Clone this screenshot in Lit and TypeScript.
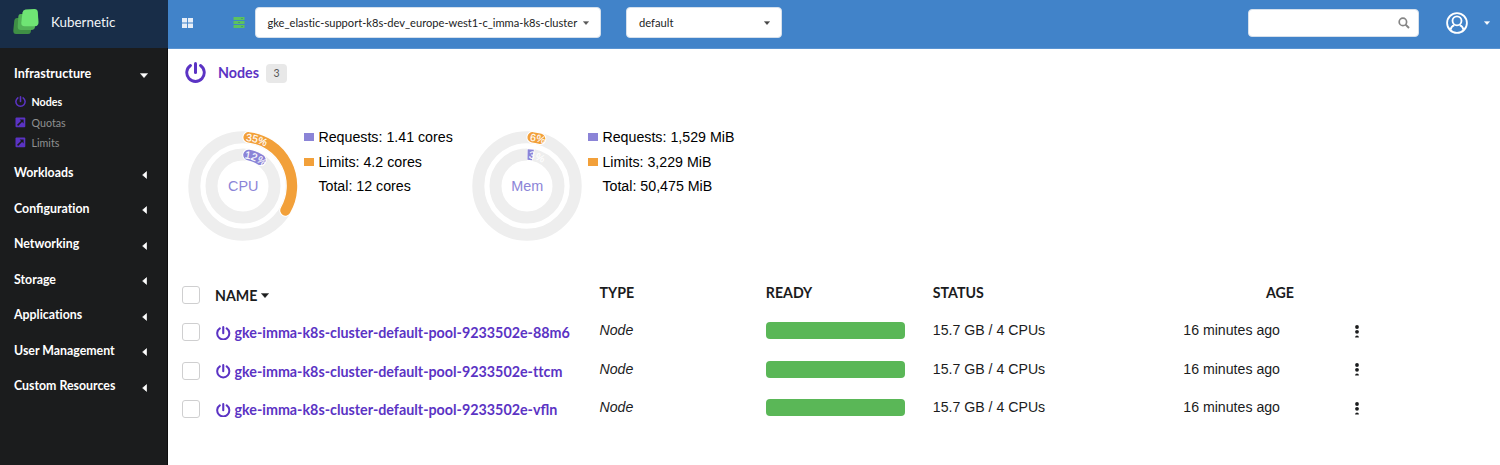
import { LitElement, html, svg, css } from "lit";
import { customElement, property } from "lit/decorators.js";

const POWER = svg`<path d="M5.500 3.500A8.750 8.750 0 1 0 15.500 3.500" fill="none" stroke="currentColor" stroke-width="2.900" stroke-linecap="round"/><path d="M10.500 1.500V10.400" stroke="currentColor" stroke-width="3" stroke-linecap="round"/>`;
const power = (cls: string) => html`<svg class=${cls} viewBox="0 0 21 21">${POWER}</svg>`;

const RAD = Math.PI / 180;
const pt = (r: number, deg: number) => `${(55 + r * Math.sin(deg * RAD)).toFixed(2)} ${(55 - r * Math.cos(deg * RAD)).toFixed(2)}`;
const arc = (r: number, a: number, b: number) => `M${pt(r, a)}A${r} ${r} 0 ${b - a > 180 ? 1 : 0} 1 ${pt(r, b)}`;

@customElement("usage-gauge")
class UsageGauge extends LitElement {
  @property() label = "";
  @property({ type: Number }) requests = 0;
  @property({ type: Number }) limits = 0;
  static styles = css`
    :host { display: block; width: 110px; height: 110px; }
    svg { display: block; width: 110px; height: 110px; overflow: visible; }
    .track { fill: none; stroke: #eee; }
    .halo { fill: none; stroke: #fff; stroke-linecap: round; }
    .bar { fill: none; stroke-linecap: round; }
    .flat { stroke-linecap: butt; }
    .lim { stroke: #f2a03a; }
    .req { stroke: #8b84d7; }
    .pct { font: 10.4px "Liberation Sans", sans-serif; fill: #fff; stroke: #fff; stroke-width: .15px; }
    .name { font: 14.4px "Liberation Sans", sans-serif; fill: #8b84d7; text-anchor: middle; }
  `;
  ring(r: number, width: number, pct: number, cls: string, id: string) {
    const end = pct * 3.6;
    const cap = (width / 2 / r) / RAD;
    const flat = end < 2 * cap;
    const d = flat ? arc(r, 1, end) : arc(r, cap + 0.5, end - cap);
    return svg`
      <path class="halo ${flat ? "flat" : ""}" d=${flat ? arc(r, 0, end + 1) : d} stroke-width=${width + 2}/>
      <path class="bar ${cls} ${flat ? "flat" : ""}" d=${d} stroke-width=${width}/>
      <path id=${id} d=${arc(r - 3.8, 3.5, 120)} fill="none"/>
      <text class="pct"><textPath href="#${id}">${pct}%</textPath></text>`;
  }
  render() {
    return html`<svg viewBox="0 0 110 110">
      <circle class="track" cx="55" cy="55" r="48.700" stroke-width="12"/>
      <circle class="track" cx="55" cy="55" r="31.500" stroke-width="12"/>
      ${this.ring(31.5, 10.6, this.requests, "req", "inner")}
      ${this.ring(49, 10.4, this.limits, "lim", "outer")}
      <text class="name" x="55.300" y="60">${this.label}</text>
    </svg>`;
  }
}

const GROUPS = [
  "Workloads",
  html`<span>Con<span class="lig">fi</span>guration</span>`,
  "Networking", "Storage", "Applications", "User Management", "Custom Resources",
];
const NODES = ["88m6", "ttcm", "vfln"];

@customElement("app-root")
class AppRoot extends LitElement {
  static styles = css`
    :host { display: grid; grid-template-columns: 168px 1fr; height: 465px; overflow: hidden; background: #fff; color: #1b1c1d; font-family: Lato, sans-serif; font-variant-ligatures: none; }
    svg { display: block; flex: none; }
    * { box-sizing: border-box; white-space: nowrap; }
    .lig { font-variant-ligatures: normal; }
    .side { background: #1b1c1d; border-right: 1px solid #0e0e0f; height: 465px; }
    .brand { height: 48px; margin-right: -1px; background: #182d48; display: flex; align-items: center; padding: 0 0 4px 13px; gap: 12px; color: #f2f5f8; font-size: 13.4px; }
    .brand span { margin-bottom: 1px; }
    .logo { width: 26px; height: 26px; }
    .menu { padding-top: 7px; }
    .group { height: 35.5px; display: flex; align-items: center; justify-content: space-between; padding: 0 20px 0 14px; color: #fff; font-weight: 700; font-size: 12.35px; }
    .group.open { font-size: 12.6px; padding: 1px 19px 0 14px; }
    .group svg { margin-top: 4px; }
    .tri-l { width: 5px; height: 8px; }
    .tri-d { width: 8px; height: 5px; }
    .sub { display: flex; align-items: center; height: 20.5px; padding-left: 15px; gap: 5.5px; color: #8f9091; font-size: 10.7px; }
    .subs { padding: 0 0 2px; }
    .sub.on { color: #fff; font-weight: 700; height: 21.5px; }
    .ico { width: 11px; height: 11px; color: #5b33c4; }
    .top { height: 49px; background: #4183c9; border-bottom: 1px solid #5a94d2; display: flex; align-items: center; padding: 0 10px 3px 14px; }
    .grid4 { width: 11px; height: 10px; margin-right: 40px; }
    .server { width: 12px; height: 11px; margin-right: 9.500px; }
    .drop { height: 31px; border: 1px solid #d5e0ec; border-radius: 4px; background: #fff; display: flex; align-items: center; justify-content: space-between; padding: 0 11px 0 12px; color: #1b1c1d; font-size: 11.2px; }
    .d1 { width: 346px; margin-right: 25.500px; font-size: 11.12px; }
    .d2 { width: 156px; }
    .caret { width: 6px; height: 4px; }
    .search { width: 171px; height: 28px; margin-left: auto; border: 1px solid #d5e0ec; border-radius: 4px; background: #fff; display: flex; align-items: center; justify-content: flex-end; padding-right: 8.5px; }
    .lens { width: 12px; height: 12px; }
    .user { width: 22px; height: 22px; margin: 0 16px 0 27px; }
    .main { min-width: 0; }
    .title { display: flex; align-items: center; height: 48px; padding-left: 16.5px; color: #5b33c4; font-weight: 700; font-size: 14.3px; }
    .title .txt { margin-bottom: 1px; }
    .big { width: 21px; height: 21px; margin: 0 12.5px 2px 0; }
    .count { margin-left: 7px; width: 21px; height: 19px; border-radius: 4px; background: #e8e8e8; color: #555; font-size: 10.5px; font-weight: 400; display: grid; place-items: center; }
    .gauges { display: flex; padding: 33.6px 0 0 20.4px; height: 179px; }
    .gauge { width: 284px; display: flex; gap: 6px; }
    .legend { font: 14.22px/24px "Liberation Sans", sans-serif; color: #000; margin-top: -5.300px; }
    .row-l { display: flex; align-items: center; gap: 4px; height: 24.3px; }
    .sw { width: 10px; height: 8px; }
    .sw.req { background: #8b84d7; }
    .sw.lim { background: #f2a03a; }
    .tr { display: grid; grid-template-columns: 32.5px 384.5px 166.300px 167px 200.200px 162px 100px; height: 38.5px; padding-left: 14.5px; align-items: center; font: 14.15px "Liberation Sans", sans-serif; }
    .tr.head { height: 37px; font: 700 14.2px Lato, sans-serif; }
    .cb { width: 18px; height: 18px; border: 1px solid #cfcfd0; border-radius: 3px; margin: 0 0 0 -.5px; }
    .head .cb { margin-top: 1px; }
    .name { display: flex; align-items: center; gap: 4px; font: 700 14.3px Lato, sans-serif; font-variant-ligatures: none; color: #5b33c4; margin-top: 1px; }
    .name.lig { font-variant-ligatures: normal; }
    .head .name { color: #1b1c1d; font-size: 14.2px; }
    .up { margin-bottom: 4px; }
    .pw { width: 14.5px; height: 14.5px; margin: 0 0 0 1px; }
    .type { font-style: italic; margin-bottom: 4px; }
    .bar { width: 139px; height: 17px; border-radius: 4px; background: #5ab757; margin-bottom: 3px; }
    .age { text-align: right; padding-right: 0; margin-right: 15px; margin-bottom: 4px; }
    .head .age { margin-right: 1px; }
    .dots { width: 4px; height: 13px; justify-self: start; margin: 0 0 2px 60.500px; }
  `;
  tri(cls: string, color: string) {
    return cls === "tri-l"
      ? html`<svg class="tri-l" viewBox="0 0 5 8"><path d="M4.600 .6V7.400L.6 4Z" fill=${color} stroke=${color} stroke-width=".6" stroke-linejoin="round" /></svg>`
      : html`<svg class=${cls} viewBox="0 0 8 5"><path d="M.3 .4H7.700L4 4.700Z" fill=${color} stroke=${color} stroke-width=".4" stroke-linejoin="round" /></svg>`;
  }
  quota() {
    return html`<svg class="ico" viewBox="0 0 11 11"><rect x=".5" y=".5" width="9.800" height="9.800" rx="1" fill="#5b33c4" /><path d="M2.600 8.400L7 4" stroke="#1b1c1d" stroke-width="1.500" /><path d="M4.600 2.400H8.600V6.400Z" fill="#1b1c1d" /></svg>`;
  }
  gauge(label: string, req: number, lim: number, r: string, l: string, t: string) {
    return html`<div class="gauge">
      <usage-gauge label=${label} requests=${req} limits=${lim}></usage-gauge>
      <div class="legend">
        <div class="row-l"><span class="sw req"></span>Requests: ${r}</div>
        <div class="row-l"><span class="sw lim"></span>Limits: ${l}</div>
        <div class="row-l"><span class="sw"></span>Total: ${t}</div>
      </div>
    </div>`;
  }
  render() {
    return html`
      <nav class="side">
        <div class="brand">
          <svg class="logo" viewBox="0 0 26 26">
            <path d="M3.800 9H15a2 2 0 0 1 2 2L18 20Q18.500 25 15 25H3Q.200 25 .300 21.500L1.300 11.500Q1.600 9 3.800 9Z" fill="#3f8f45" />
            <path d="M7.500 5H18a3 3 0 0 1 3 3L22 17Q22.300 21 18 21H8Q4.500 21 4.700 17.500L5.300 8Q5.500 5 7.500 5Z" fill="#52b257" />
            <path d="M12.500 .500L21.500 0Q24.500 0 24.800 3L25.500 13Q25.700 17 22 17.300H11.500Q8 17.300 8.300 13.500L9.500 3.500Q9.900 .800 12.500 .500Z" fill="#6fe574" />
          </svg>
          <span>Kubernetic</span>
        </div>
        <div class="menu">
          <div class="group open">Infrastructure${this.tri("tri-d", "#fff")}</div>
          <div class="subs">
            <div class="sub on">${power("ico")}Nodes</div>
            <div class="sub">${this.quota()}Quotas</div>
            <div class="sub">${this.quota()}Limits</div>
          </div>
          ${GROUPS.map((g) => html`<div class="group">${g}${this.tri("tri-l", "#fff")}</div>`)}
        </div>
      </nav>
      <main class="main">
        <header class="top">
          <svg class="grid4" viewBox="0 0 11 10"><path d="M0 0H5.100V4.500H0ZM6 0H11V4.500H6ZM0 5.500H5.100V10H0ZM6 5.500H11V10H6Z" fill="#e6eef8" /></svg>
          <svg class="server" viewBox="0 0 12 11"><path d="M.5 0H11.500V3H.5ZM.5 4H11.500V7H.5ZM.5 8H11.500V11H.5Z" fill="#5cc25f" /><path d="M8 1.500H10M5 5.500H7M8 9.500H10" stroke="#3f9a68" stroke-width=".8" /></svg>
          <div class="drop d1">gke_elastic-support-k8s-dev_europe-west1-c_imma-k8s-cluster${this.tri("caret", "#555")}</div>
          <div class="drop d2">default${this.tri("caret", "#444")}</div>
          <div class="search"><svg class="lens" viewBox="0 0 12 12"><circle cx="4.900" cy="4.900" r="3.700" fill="none" stroke="#858585" stroke-width="1.700" /><path d="M7.600 7.600L11 11" stroke="#858585" stroke-width="2" /></svg></div>
          <svg class="user" viewBox="0 0 22 22" fill="none" stroke="#fff" stroke-width="1.800"><circle cx="11" cy="11" r="9.900" /><circle cx="11" cy="8.800" r="4.500" /><path d="M4.500 17.800C5 15.300 6.300 14 8.300 13.200M17.500 17.800C17 15.300 15.700 14 13.700 13.200" /></svg>
          ${this.tri("caret", "#fff")}
        </header>
        <div class="title">${power("big")}<span class="txt">Nodes</span><span class="count">3</span></div>
        <section class="gauges">
          ${this.gauge("CPU", 12, 35, "1.41 cores", "4.2 cores", "12 cores")}
          ${this.gauge("Mem", 3, 6, "1,529 MiB", "3,229 MiB", "50,475 MiB")}
        </section>
        <section>
          <div class="tr head"><span class="cb"></span><span class="name">NAME ${this.tri("tri-d", "#1b1c1d")}</span><span class="up">TYPE</span><span class="up">READY</span><span class="up">STATUS</span><span class="age">AGE</span></div>
          ${NODES.map((n) => html`<div class="tr"><span class="cb"></span><span class="name ${n.includes("fl") ? "lig" : ""}">${power("pw")}gke-imma-k8s-cluster-default-pool-9233502e-${n}</span><span class="type">Node</span><span class="bar"></span><span class="up">15.7 GB / 4 CPUs</span><span class="age">16 minutes ago</span>
            <svg class="dots" viewBox="0 0 4 13"><circle cx="2" cy="2" r="1.900" fill="#1b1c1d" /><circle cx="2" cy="6.800" r="1.900" fill="#1b1c1d" /><path d="M.1 12.400A1.900 1.900 0 0 1 3.900 12.400Z" fill="#1b1c1d" /></svg></div>`)}
        </section>
      </main>`;
  }
}
